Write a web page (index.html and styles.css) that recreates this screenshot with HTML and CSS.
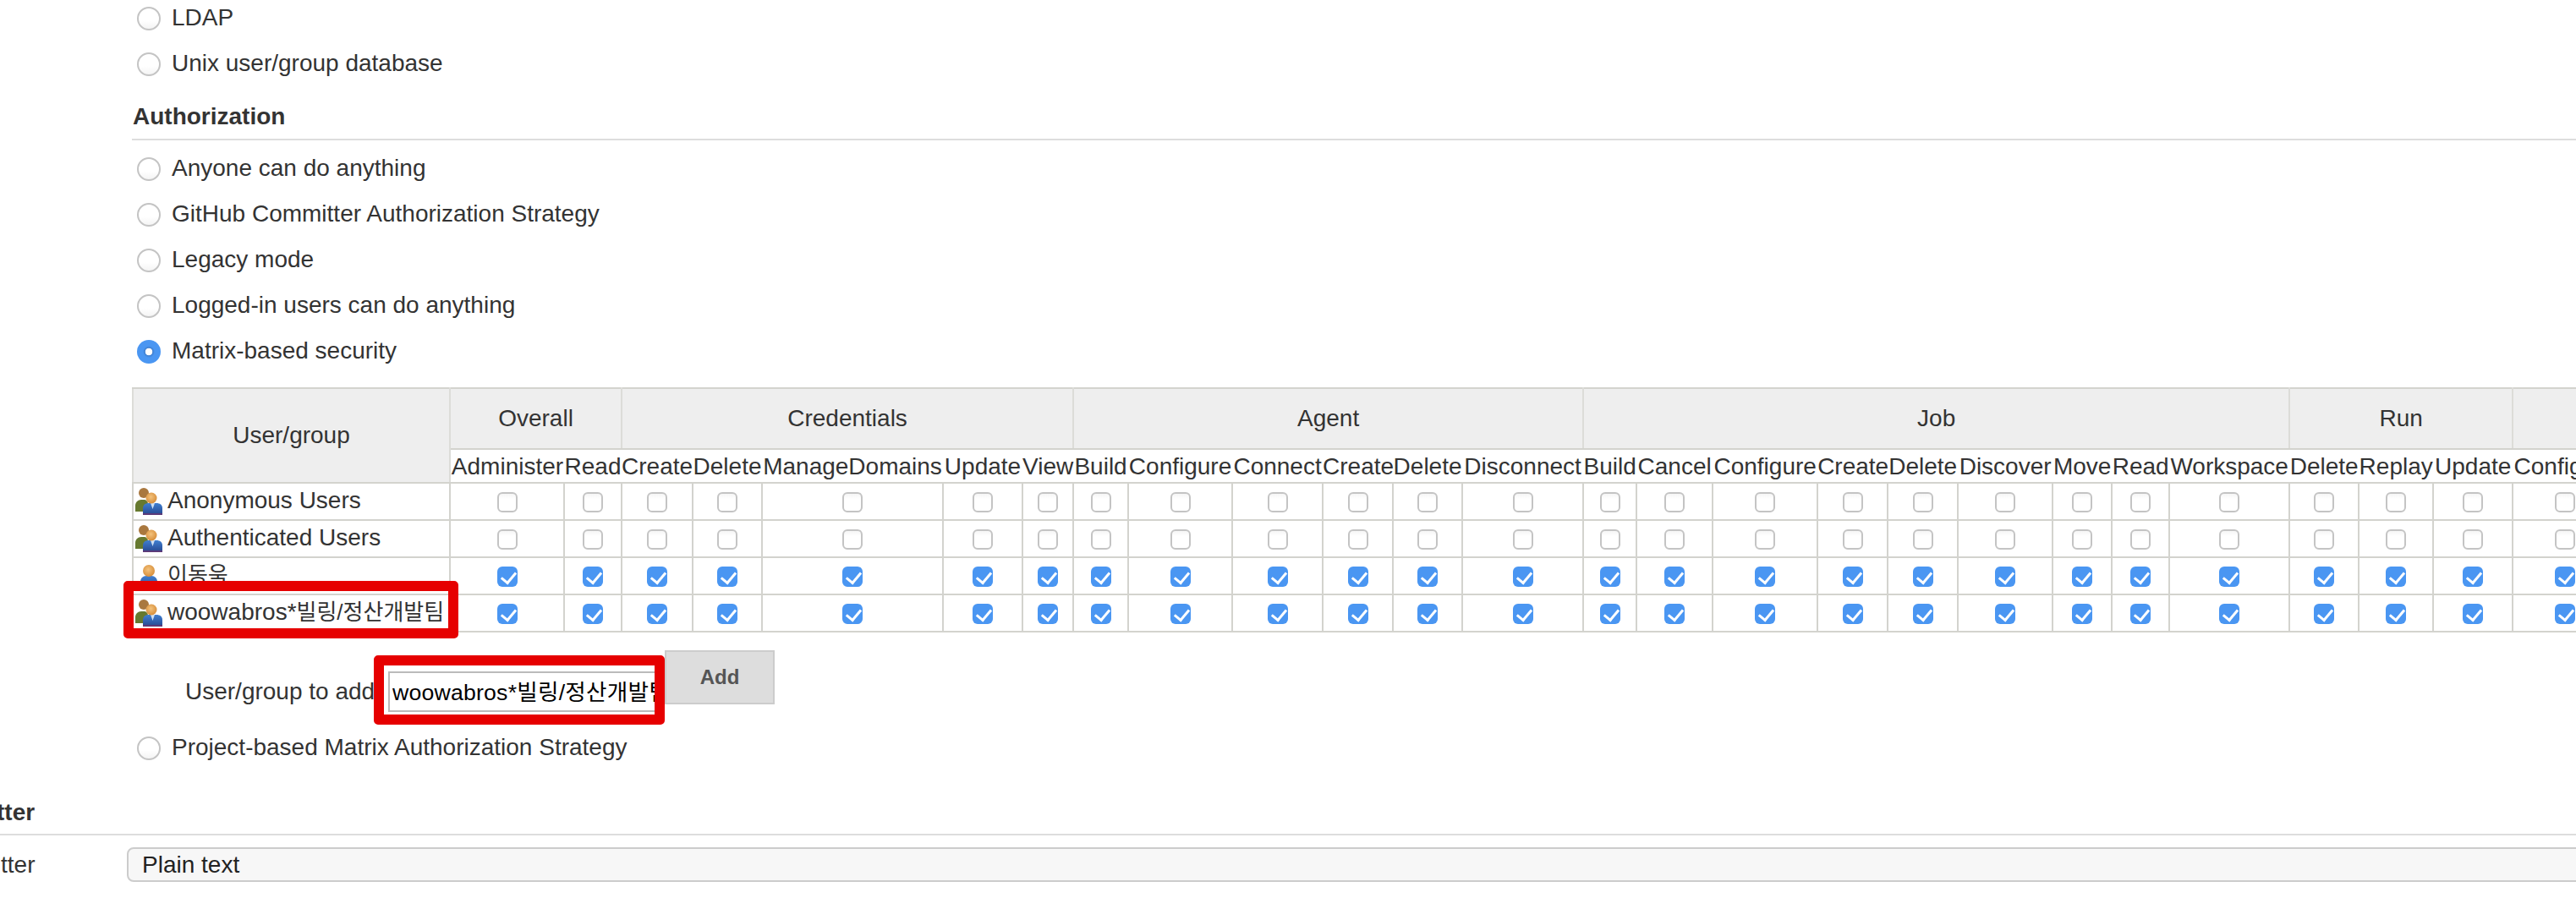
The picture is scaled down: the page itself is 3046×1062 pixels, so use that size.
FILE: index.html
```html
<!DOCTYPE html>
<html lang="en">
<head>
<meta charset="utf-8">
<title>Configure Global Security</title>
<link rel="stylesheet" href="styles.css">
</head>
<body>
<svg class="defs" width="0" height="0" aria-hidden="true">
  <defs>
    <radialGradient id="skin" cx="0.45" cy="0.4" r="0.65"><stop offset="0" stop-color="#f3c27c"/><stop offset="1" stop-color="#d58a35"/></radialGradient>
    <linearGradient id="suit" x1="0" y1="0" x2="0" y2="1"><stop offset="0" stop-color="#3f7fd0"/><stop offset="1" stop-color="#27478f"/></linearGradient>
    <symbol id="group" viewBox="0 0 32 32">
      <path d="M0 28v-7c0-4 3-7 7-7h3c3 0 5 2 5 5v9z" fill="#66792f"/>
      <circle cx="10" cy="6" r="6" fill="#a9783f"/>
      <path d="M9 32v-8c0-4 3-6 7-6h9c4 0 7 2 7 6v8z" fill="url(#suit)"/>
      <path d="M9 30h23v2H9z" fill="#5b3a78"/>
      <path d="M18 18h5l-2.500 7z" fill="#cfe0f2"/>
      <circle cx="19" cy="12" r="6.500" fill="url(#skin)"/>
    </symbol>
    <symbol id="person" viewBox="0 0 32 32">
      <path d="M6 32v-9c0-4 3-7 7-7h6c4 0 7 3 7 7v9z" fill="url(#suit)"/>
      <circle cx="16" cy="10" r="7" fill="url(#skin)"/>
    </symbol>
  </defs>
</svg>
<main class="page">
  <section class="indent">
    <label class="option"><input class="radio" type="radio" name="realm">LDAP</label>
    <label class="option"><input class="radio" type="radio" name="realm">Unix user/group database</label>

    <h2 class="section-title first">Authorization</h2>
    <label class="option"><input class="radio" type="radio" name="auth">Anyone can do anything</label>
    <label class="option"><input class="radio" type="radio" name="auth">GitHub Committer Authorization Strategy</label>
    <label class="option"><input class="radio" type="radio" name="auth">Legacy mode</label>
    <label class="option"><input class="radio" type="radio" name="auth">Logged-in users can do anything</label>
    <label class="option"><input class="radio" type="radio" name="auth" checked>Matrix-based security</label>

    <div class="matrix-wrap">
      <table class="matrix">
        <colgroup>
          <col class="w375">
          <col class="w135"><col class="w68">
          <col class="w84"><col class="w82"><col class="w214"><col class="w94"><col class="w60">
          <col class="w65"><col class="w123"><col class="w107"><col class="w83"><col class="w82"><col class="w143">
          <col class="w63"><col class="w90"><col class="w124"><col class="w83"><col class="w83"><col class="w112"><col class="w70"><col class="w68"><col class="w142">
          <col class="w82"><col class="w88"><col class="w94">
          <col class="w124">
        </colgroup>
        <thead>
          <tr class="groups">
            <th rowspan="2">User/group</th>
            <th colspan="2">Overall</th>
            <th colspan="5">Credentials</th>
            <th colspan="6">Agent</th>
            <th colspan="9">Job</th>
            <th colspan="3">Run</th>
            <th></th>
          </tr>
          <tr class="perms">
            <th>Administer</th><th>Read</th>
            <th>Create</th><th>Delete</th><th>ManageDomains</th><th>Update</th><th>View</th>
            <th>Build</th><th>Configure</th><th>Connect</th><th>Create</th><th>Delete</th><th>Disconnect</th>
            <th>Build</th><th>Cancel</th><th>Configure</th><th>Create</th><th>Delete</th><th>Discover</th><th>Move</th><th>Read</th><th>Workspace</th>
            <th>Delete</th><th>Replay</th><th>Update</th>
            <th>Configure</th>
          </tr>
        </thead>
        <tbody>
          <tr>
            <td class="who"><div class="who-in"><svg class="avatar"><use href="#group"/></svg><span class="name">Anonymous Users</span></div></td>
            <td><input class="cb" type="checkbox"></td><td><input class="cb" type="checkbox"></td>
            <td><input class="cb" type="checkbox"></td><td><input class="cb" type="checkbox"></td><td><input class="cb" type="checkbox"></td><td><input class="cb" type="checkbox"></td><td><input class="cb" type="checkbox"></td>
            <td><input class="cb" type="checkbox"></td><td><input class="cb" type="checkbox"></td><td><input class="cb" type="checkbox"></td><td><input class="cb" type="checkbox"></td><td><input class="cb" type="checkbox"></td><td><input class="cb" type="checkbox"></td>
            <td><input class="cb" type="checkbox"></td><td><input class="cb" type="checkbox"></td><td><input class="cb" type="checkbox"></td><td><input class="cb" type="checkbox"></td><td><input class="cb" type="checkbox"></td><td><input class="cb" type="checkbox"></td><td><input class="cb" type="checkbox"></td><td><input class="cb" type="checkbox"></td><td><input class="cb" type="checkbox"></td>
            <td><input class="cb" type="checkbox"></td><td><input class="cb" type="checkbox"></td><td><input class="cb" type="checkbox"></td>
            <td><input class="cb" type="checkbox"></td>
          </tr>
          <tr>
            <td class="who"><div class="who-in"><svg class="avatar"><use href="#group"/></svg><span class="name">Authenticated Users</span></div></td>
            <td><input class="cb" type="checkbox"></td><td><input class="cb" type="checkbox"></td>
            <td><input class="cb" type="checkbox"></td><td><input class="cb" type="checkbox"></td><td><input class="cb" type="checkbox"></td><td><input class="cb" type="checkbox"></td><td><input class="cb" type="checkbox"></td>
            <td><input class="cb" type="checkbox"></td><td><input class="cb" type="checkbox"></td><td><input class="cb" type="checkbox"></td><td><input class="cb" type="checkbox"></td><td><input class="cb" type="checkbox"></td><td><input class="cb" type="checkbox"></td>
            <td><input class="cb" type="checkbox"></td><td><input class="cb" type="checkbox"></td><td><input class="cb" type="checkbox"></td><td><input class="cb" type="checkbox"></td><td><input class="cb" type="checkbox"></td><td><input class="cb" type="checkbox"></td><td><input class="cb" type="checkbox"></td><td><input class="cb" type="checkbox"></td><td><input class="cb" type="checkbox"></td>
            <td><input class="cb" type="checkbox"></td><td><input class="cb" type="checkbox"></td><td><input class="cb" type="checkbox"></td>
            <td><input class="cb" type="checkbox"></td>
          </tr>
          <tr>
            <td class="who"><div class="who-in"><svg class="avatar"><use href="#person"/></svg><span class="name"><span class="ko">이동욱</span></span></div></td>
            <td><input class="cb" type="checkbox" checked></td><td><input class="cb" type="checkbox" checked></td>
            <td><input class="cb" type="checkbox" checked></td><td><input class="cb" type="checkbox" checked></td><td><input class="cb" type="checkbox" checked></td><td><input class="cb" type="checkbox" checked></td><td><input class="cb" type="checkbox" checked></td>
            <td><input class="cb" type="checkbox" checked></td><td><input class="cb" type="checkbox" checked></td><td><input class="cb" type="checkbox" checked></td><td><input class="cb" type="checkbox" checked></td><td><input class="cb" type="checkbox" checked></td><td><input class="cb" type="checkbox" checked></td>
            <td><input class="cb" type="checkbox" checked></td><td><input class="cb" type="checkbox" checked></td><td><input class="cb" type="checkbox" checked></td><td><input class="cb" type="checkbox" checked></td><td><input class="cb" type="checkbox" checked></td><td><input class="cb" type="checkbox" checked></td><td><input class="cb" type="checkbox" checked></td><td><input class="cb" type="checkbox" checked></td><td><input class="cb" type="checkbox" checked></td>
            <td><input class="cb" type="checkbox" checked></td><td><input class="cb" type="checkbox" checked></td><td><input class="cb" type="checkbox" checked></td>
            <td><input class="cb" type="checkbox" checked></td>
          </tr>
          <tr>
            <td class="who"><div class="who-in"><svg class="avatar"><use href="#group"/></svg><span class="name">woowabros*<span class="ko">빌링/정산개발팀</span></span></div></td>
            <td><input class="cb" type="checkbox" checked></td><td><input class="cb" type="checkbox" checked></td>
            <td><input class="cb" type="checkbox" checked></td><td><input class="cb" type="checkbox" checked></td><td><input class="cb" type="checkbox" checked></td><td><input class="cb" type="checkbox" checked></td><td><input class="cb" type="checkbox" checked></td>
            <td><input class="cb" type="checkbox" checked></td><td><input class="cb" type="checkbox" checked></td><td><input class="cb" type="checkbox" checked></td><td><input class="cb" type="checkbox" checked></td><td><input class="cb" type="checkbox" checked></td><td><input class="cb" type="checkbox" checked></td>
            <td><input class="cb" type="checkbox" checked></td><td><input class="cb" type="checkbox" checked></td><td><input class="cb" type="checkbox" checked></td><td><input class="cb" type="checkbox" checked></td><td><input class="cb" type="checkbox" checked></td><td><input class="cb" type="checkbox" checked></td><td><input class="cb" type="checkbox" checked></td><td><input class="cb" type="checkbox" checked></td><td><input class="cb" type="checkbox" checked></td>
            <td><input class="cb" type="checkbox" checked></td><td><input class="cb" type="checkbox" checked></td><td><input class="cb" type="checkbox" checked></td>
            <td><input class="cb" type="checkbox" checked></td>
          </tr>
        </tbody>
      </table>
      <div class="callout callout-row"></div>
    </div>

    <div class="add-row">
      <span class="add-label">User/group to add</span>
      <input class="add-input" type="text" value="woowabros*빌링/정산개발팀">
      <button class="add-btn" type="button">Add</button>
      <div class="callout callout-input"></div>
    </div>

    <label class="option project"><input class="radio" type="radio" name="auth">Project-based Matrix Authorization Strategy</label>
  </section>

  <h2 class="section-title formatter"><span class="clip-bold">tter</span></h2>
  <div class="field">
    <span class="field-label">tter</span>
    <select class="field-select"><option>Plain text</option></select>
  </div>
</main>
</body>
</html>
```

FILE: styles.css
```css
* { box-sizing: border-box; }

html, body {
  margin: 0;
  width: 3046px;
  height: 1062px;
  overflow: hidden;
  background: #fff;
}

body {
  font-family: "Liberation Sans", "Noto Sans CJK KR", sans-serif;
  font-size: 28px;
  color: #333;
}

.defs { position: absolute; }

.page { width: 3046px; }

.indent { padding-left: 156px; }

.option {
  display: flex;
  align-items: center;
  height: 44px;
  margin-bottom: 10px;
  padding-bottom: 2px;
  line-height: 32px;
  white-space: nowrap;
}

.radio {
  appearance: none;
  flex: none;
  width: 28px;
  height: 28px;
  margin: 2px 13px 0 6px;
  border: 2px solid #c4c4c4;
  border-radius: 50%;
  background: linear-gradient(#fff 60%, #f4f4f4);
}

.radio:checked {
  border: 0;
  background: radial-gradient(circle at 50% 50%, #fff 0 4px, #3f7fd0 4.6px, #4a96f2 7px);
}

.section-title {
  margin: 0;
  font-size: 28px;
  font-weight: 700;
  line-height: 32px;
  border-bottom: 2px solid #ddd;
}

.section-title.first {
  height: 48px;
  margin: 20px 0 12px;
  padding: 4px 0 0 1px;
}

.matrix-wrap {
  position: relative;
  margin-top: 20px;
}

.matrix {
  table-layout: fixed;
  width: 2938px;
  border-collapse: collapse;
}

.w60 { width: 60px; }
.w63 { width: 63px; }
.w65 { width: 65px; }
.w68 { width: 68px; }
.w70 { width: 70px; }
.w82 { width: 82px; }
.w83 { width: 83px; }
.w84 { width: 84px; }
.w88 { width: 88px; }
.w90 { width: 90px; }
.w94 { width: 94px; }
.w107 { width: 107px; }
.w112 { width: 112px; }
.w123 { width: 123px; }
.w124 { width: 124px; }
.w135 { width: 135px; }
.w142 { width: 142px; }
.w143 { width: 143px; }
.w214 { width: 214px; }
.w375 { width: 375px; }

.matrix th,
.matrix td {
  padding: 0;
  border: 2px solid #d3d3ce;
  text-align: center;
  white-space: nowrap;
  overflow: visible;
}

.matrix th { font-weight: 400; }

.groups th {
  height: 72px;
  background: #eee;
  border-left-color: #dcdcd8;
  border-right-color: #dcdcd8;
}

.perms th {
  height: 40px;
  padding-top: 1px;
  background: #fff;
  border-left: 0;
  border-right: 0;
  line-height: 36px;
}

.matrix tbody td { height: 44px; }

.who-in {
  display: flex;
  align-items: center;
  gap: 6px;
  padding-left: 2px;
}

.avatar {
  display: block;
  flex: none;
  width: 32px;
  height: 32px;
}

.name {
  padding-bottom: 2px;
  line-height: 32px;
}

.ko {
  font-size: 26px;
  line-height: 0;
}

.matrix td.who { text-align: left; overflow: hidden; }

.cb {
  appearance: none;
  position: relative;
  display: block;
  width: 24px;
  height: 24px;
  margin: 2px auto 0;
  border: 2px solid #c4c4c4;
  border-radius: 6px;
  background: linear-gradient(#f6f6f6, #fff 30%);
}

.cb:checked {
  border: 0;
  background: #4a96f2;
}

.cb:checked::after {
  content: "";
  position: absolute;
  left: 8px;
  top: 3px;
  width: 8px;
  height: 14px;
  border-right: 3px solid #fff;
  border-bottom: 3px solid #fff;
  transform: rotate(40deg);
}

.callout {
  position: absolute;
  border: 12px solid #e60000;
  border-radius: 5px;
  pointer-events: none;
}

.callout-row {
  left: -10px;
  top: 229px;
  width: 396px;
  height: 68px;
}

.add-row {
  position: relative;
  display: flex;
  align-items: flex-start;
  margin-top: 21px;
  height: 73px;
}

.add-label {
  flex: none;
  width: 221px;
  margin: 33px 0 0 63px;
  line-height: 32px;
  white-space: nowrap;
}

.add-input {
  flex: none;
  width: 327px;
  height: 48px;
  margin: 25px 0 0 19px;
  padding: 0 3px 3px;
  border: 2px solid #bbb;
  font: 26.67px "Liberation Sans", "Noto Sans CJK KR", sans-serif;
  letter-spacing: 0.2px;
  color: #000;
  outline: 0;
}

.add-btn {
  flex: none;
  width: 130px;
  height: 64px;
  border: 2px solid #ccc;
  border-radius: 0;
  background: #ddd;
  font: 700 24px "Liberation Sans", sans-serif;
  color: #555;
  padding: 0;
}

.callout-input {
  left: 286px;
  top: 6px;
  width: 344px;
  height: 82px;
}

.option.project { margin: 21px 0 0; }

.section-title.formatter {
  height: 46px;
  margin-top: 35px;
  padding-top: 3px;
}

.clip-bold { display: block; margin-left: -4px; }

.field {
  display: flex;
  align-items: center;
  height: 41px;
  margin-top: 14px;
}

.field-label {
  flex: none;
  width: 150px;
  padding-left: 1px;
}

.field-select {
  appearance: none;
  flex: none;
  width: 3000px;
  height: 41px;
  padding: 0 16px;
  border: 2px solid #ccc;
  border-radius: 8px;
  background: #f7f7f7;
  font: 28px "Liberation Sans", sans-serif;
  color: #222;
}
```
